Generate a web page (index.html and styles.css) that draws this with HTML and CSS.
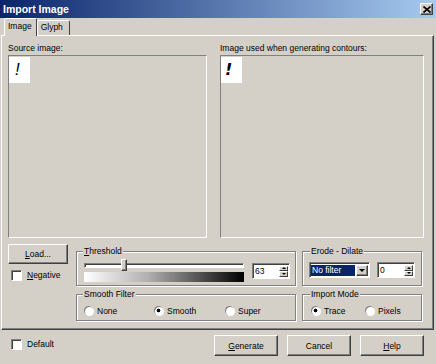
FILE: index.html
```html
<!DOCTYPE html>
<html>
<head>
    <title>Import Image</title>
    <link rel="stylesheet" href="styles.css">
</head>
<body>
<div class="window">
    <div class="titlebar">
        <span class="title">Import Image</span>
        <span class="close-btn">
            <svg width="8" height="7" viewBox="0 0 8 7"><path d="M0.5 0.5 L7.5 6.5 M7.5 0.5 L0.5 6.5" stroke="#000" stroke-width="1.6"/></svg>
        </span>
    </div>

    <div class="tabs">
        <div class="tab active">Image</div>
        <div class="tab">Glyph</div>
    </div>

    <div class="panel">
        <div class="previews">
            <div class="preview preview-left">
                <div class="caption">Source image:</div>
                <div class="imagebox"><div class="thumb">!</div></div>
            </div>
            <div class="preview preview-right">
                <div class="caption">Image used when generating contours:</div>
                <div class="imagebox"><div class="thumb thumb-bold">!</div></div>
            </div>
        </div>

        <div class="controls">
            <div class="col-load">
                <button class="btn btn-load"><u>L</u>oad...</button>
                <div class="check-row">
                    <span class="check"></span><span><u>N</u>egative</span>
                </div>
            </div>

            <div class="col-mid">
                <div class="group group-threshold">
                    <div class="legend"><u>T</u>hreshold</div>
                    <div class="threshold-row">
                        <div class="slider-col">
                            <div class="slider">
                                <div class="track"></div>
                                <div class="thumb-knob"></div>
                            </div>
                            <div class="ramp"></div>
                        </div>
                        <div class="spin">
                            <span class="spin-value">63</span>
                            <span class="spin-btns"><span class="spin-up"></span><span class="spin-down"></span></span>
                        </div>
                    </div>
                </div>
                <div class="group group-radios">
                    <div class="legend">Smooth Filter</div>
                    <div class="radio-row">
                        <span class="radio-item w70"><span class="radio"></span>None</span>
                        <span class="radio-item w71"><span class="radio on"></span>Smooth</span>
                        <span class="radio-item"><span class="radio"></span>Super</span>
                    </div>
                </div>
            </div>

            <div class="col-right">
                <div class="group group-threshold group-narrow">
                    <div class="legend legend-right">Erode - Dilate</div>
                    <div class="erode-row">
                        <div class="combo">
                            <span class="combo-value">No filter</span>
                            <span class="combo-btn"></span>
                        </div>
                        <div class="spin">
                            <span class="spin-value">0</span>
                            <span class="spin-btns"><span class="spin-up"></span><span class="spin-down"></span></span>
                        </div>
                    </div>
                </div>
                <div class="group group-radios group-narrow">
                    <div class="legend legend-right">Import Mode</div>
                    <div class="radio-row mode-row">
                        <span class="radio-item w54"><span class="radio on"></span>Trace</span>
                        <span class="radio-item"><span class="radio"></span>Pixels</span>
                    </div>
                </div>
            </div>
        </div>
    </div>

    <div class="footer">
        <div class="check-row footer-check">
            <span class="check"></span><span>Default</span>
        </div>
        <div class="buttons">
            <button class="btn"><u>G</u>enerate</button>
            <button class="btn">Cancel</button>
            <button class="btn"><u>H</u>elp</button>
        </div>
    </div>
</div>
</body>
</html>
```

FILE: styles.css
```css
/* Classic Windows dialog look */
* {
    box-sizing: border-box;
}

body {
    margin: 0;
    background-color: #d4d0c8;
    font-family: "Liberation Sans", Arial, sans-serif;
    font-size: 8.5px;
    color: #000;
}

u {
    text-decoration: underline;
    text-underline-offset: 1px;
}

.window {
    width: 436px;
    height: 364px;
    display: flex;
    flex-direction: column;
    overflow: hidden;
}

/* Title bar */
.titlebar {
    height: 18px;
    flex: none;
    background: linear-gradient(to right, #0a246a, #a6caf0);
    display: flex;
    align-items: center;
    justify-content: space-between;
    padding: 0 3px 0 3px;
}

.title {
    color: #fff;
    font-weight: bold;
    font-size: 10.5px;
}

.close-btn {
    width: 13px;
    height: 12px;
    background-color: #d4d0c8;
    border: 1px solid;
    border-color: #fff #404040 #404040 #fff;
    box-shadow: inset -1px -1px #808080;
    display: flex;
    align-items: center;
    justify-content: center;
}

/* Tabs */
.tabs {
    height: 17px;
    flex: none;
    display: flex;
    align-items: flex-end;
    padding-left: 4px;
}

.tab {
    height: 15px;
    line-height: 13px;
    padding: 0 6px 0 3px;
    border: 1px solid;
    border-bottom: none;
    border-color: #fff #404040 transparent #fff;
    border-radius: 2px 2px 0 0;
}

.tab.active {
    height: 18px;
    margin-bottom: -1px;
    padding: 1px 4px 0 3px;
    background-color: #d4d0c8;
    position: relative;
    z-index: 1;
}

/* Tab page */
.panel {
    flex: none;
    height: 295px;
    width: 433px;
    margin-left: 1px;
    border: 1px solid;
    border-color: #fff #404040 #404040 #fff;
    box-shadow: inset -1px -1px #808080;
    padding: 7px 0 0 6px;
}

.previews {
    display: flex;
    gap: 13px;
}

.preview-left {
    width: 199px;
}

.preview-right {
    width: 204px;
}

.caption {
    line-height: 11px;
    height: 11px;
}

.imagebox {
    margin-top: 1px;
    height: 183px;
    border: 1px solid;
    border-color: #808080 #fff #fff #808080;
    padding: 1px 0 0 0;
}

.thumb {
    width: 21px;
    height: 26px;
    background-color: #fff;
    font-family: "Liberation Sans", Arial, sans-serif;
    font-style: italic;
    font-size: 17px;
    line-height: 26px;
    padding-left: 6px;
}

.thumb-bold {
    font-family: "DejaVu Sans", sans-serif;
    font-weight: bold;
    font-size: 16px;
    padding-left: 4px;
}

/* Lower controls */
.controls {
    display: flex;
    margin-top: 6px;
}

.col-load {
    width: 60px;
    margin-right: 8px;
}

.col-mid {
    width: 220px;
    margin-right: 6px;
}

.col-right {
    width: 120px;
}

.btn {
    width: 64px;
    height: 21px;
    padding: 0;
    font-family: inherit;
    font-size: 8.5px;
    color: #000;
    background-color: #d4d0c8;
    border: 1px solid;
    border-color: #fff #404040 #404040 #fff;
    box-shadow: inset -1px -1px #808080;
    border-radius: 0;
}

.btn-load {
    width: 60px;
    height: 20px;
}

.check-row {
    display: flex;
    align-items: center;
    gap: 5px;
    line-height: 11px;
}

.col-load .check-row {
    margin-top: 6px;
    padding-left: 3px;
}

.check {
    width: 11px;
    height: 11px;
    background-color: #fff;
    border: 1px solid;
    border-color: #808080 #fff #fff #808080;
    box-shadow: inset 1px 1px #404040;
}

/* Group boxes */
.group {
    border: 1px solid #808080;
    box-shadow: inset 1px 1px #fff, 1px 1px #fff;
    padding: 0 0 0 7px;
}

.group-threshold {
    margin-top: 7px;
    height: 35px;
}

.group-radios {
    margin-top: 8px;
    height: 27px;
}

.group-narrow {
    padding-left: 6px;
}

.legend {
    width: fit-content;
    margin: -6px 0 0 -1px;
    padding: 0 1px;
    line-height: 11px;
    height: 11px;
    background-color: #d4d0c8;
}

.legend-right {
    margin-left: 1px;
}

.threshold-row {
    display: flex;
    align-items: center;
    gap: 8px;
    margin-top: 2px;
}

.slider-col {
    width: 160px;
}

.slider {
    height: 12px;
    position: relative;
    display: flex;
    align-items: center;
}

.track {
    width: 100%;
    height: 5px;
    background-color: #fff;
    border: 1px solid;
    border-color: #808080 #fff #fff #808080;
    box-shadow: inset 1px 1px #404040;
}

.thumb-knob {
    position: absolute;
    left: 37px;
    top: 0;
    width: 6px;
    height: 12px;
    background-color: #d4d0c8;
    border: 1px solid;
    border-color: #fff #404040 #404040 #fff;
    box-shadow: inset -1px -1px #808080;
}

.ramp {
    margin-top: 1px;
    height: 10px;
    background: linear-gradient(to right, #fff 0%, #b0b0b0 40%, #000 100%);
}

.spin {
    width: 38px;
    height: 16px;
    display: flex;
    background-color: #fff;
    border: 1px solid;
    border-color: #808080 #fff #fff #808080;
    box-shadow: inset 1px 1px #404040;
    padding: 2px 1px 1px 2px;
}

.spin-value {
    flex: 1;
    line-height: 11px;
}

.spin-btns {
    width: 9px;
    display: flex;
    flex-direction: column;
}

.spin-up,
.spin-down {
    flex: 1;
    background-color: #d4d0c8;
    border: 1px solid;
    border-color: #fff #404040 #404040 #fff;
    display: flex;
    align-items: center;
    justify-content: center;
}

.spin-up::after {
    content: "";
    border-left: 2px solid transparent;
    border-right: 2px solid transparent;
    border-bottom: 2px solid #000;
}

.spin-down::after {
    content: "";
    border-left: 2px solid transparent;
    border-right: 2px solid transparent;
    border-top: 2px solid #000;
}

.erode-row {
    display: flex;
    align-items: center;
    gap: 7px;
    margin-top: 5px;
}

.combo {
    width: 61px;
    height: 16px;
    display: flex;
    background-color: #fff;
    border: 1px solid;
    border-color: #808080 #fff #fff #808080;
    box-shadow: inset 1px 1px #404040;
    padding: 2px 1px 1px 1px;
}

.combo-value {
    flex: 1;
    background-color: #0a246a;
    color: #fff;
    line-height: 11px;
    padding-left: 1px;
    margin-right: 1px;
}

.combo-btn {
    width: 12px;
    background-color: #d4d0c8;
    border: 1px solid;
    border-color: #fff #404040 #404040 #fff;
    box-shadow: inset -1px -1px #808080;
    display: flex;
    align-items: center;
    justify-content: center;
}

.combo-btn::after {
    content: "";
    border-left: 3px solid transparent;
    border-right: 3px solid transparent;
    border-top: 3px solid #000;
}

.radio-row {
    display: flex;
    align-items: center;
    margin-top: 4px;
    height: 13px;
}

.mode-row {
    padding-left: 2px;
}

.radio-item {
    display: flex;
    align-items: center;
    gap: 4px;
}

.w70 {
    width: 70px;
}

.w71 {
    width: 71px;
}

.w54 {
    width: 54px;
}

.radio {
    width: 9px;
    height: 9px;
    border-radius: 50%;
    background-color: #fff;
    box-shadow: inset 1px 1px #808080, 1px 1px #fff;
}

.radio.on {
    background: radial-gradient(circle, #000 0, #000 1.6px, #fff 2.2px);
}

/* Bottom bar */
.footer {
    flex: 1;
    display: flex;
    align-items: flex-start;
    padding: 5px 12px 0 11px;
}

.footer-check {
    margin-top: 4px;
}

.buttons {
    margin-left: auto;
    display: flex;
    gap: 9px;
}
```
